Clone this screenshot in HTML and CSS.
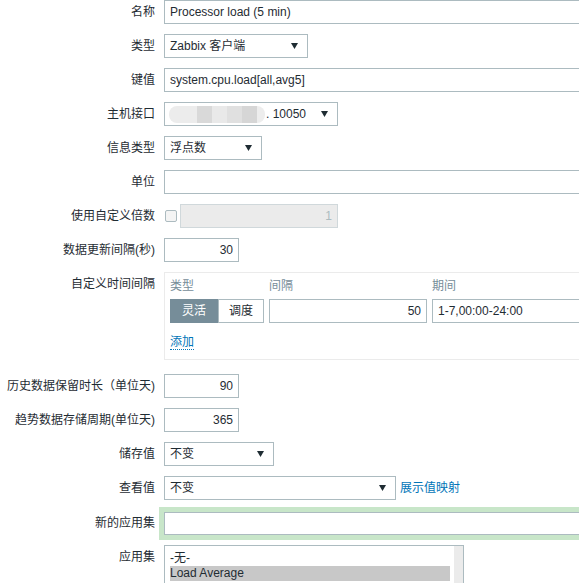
FILE: index.html
```html
<!DOCTYPE html>
<html lang="zh">
<head>
<meta charset="utf-8">
<title>Item</title>
<link rel="stylesheet" href="styles.css">
</head>
<body>
<div class="form">
  <div class="row">
    <div class="label">名称</div>
    <div class="field"><div class="input wide">Processor load (5 min)</div></div>
  </div>
  <div class="row">
    <div class="label">类型</div>
    <div class="field"><div class="select w144"><span>Zabbix 客户端</span><svg class="arrow" viewBox="0 0 7 6"><polygon points="0,0 7,0 3.5,6"/></svg></div></div>
  </div>
  <div class="row">
    <div class="label">键值</div>
    <div class="field"><div class="input wide">system.cpu.load[all,avg5]</div></div>
  </div>
  <div class="row">
    <div class="label">主机接口</div>
    <div class="field"><div class="select w174"><span class="blurwrap"><span class="blur b1"></span><span class="blur b2"></span><span class="blur b3"></span><span class="blur b4"></span><span class="blur b5"></span><span class="blur b6"></span><span class="port">. 10050</span></span><svg class="arrow" viewBox="0 0 7 6"><polygon points="0,0 7,0 3.5,6"/></svg></div></div>
  </div>
  <div class="row">
    <div class="label">信息类型</div>
    <div class="field"><div class="select w98"><span>浮点数</span><svg class="arrow" viewBox="0 0 7 6"><polygon points="0,0 7,0 3.5,6"/></svg></div></div>
  </div>
  <div class="row">
    <div class="label">单位</div>
    <div class="field"><div class="input wide"></div></div>
  </div>
  <div class="row">
    <div class="label">使用自定义倍数</div>
    <div class="field inline"><span class="checkbox"></span><div class="input disabled w158 right">1</div></div>
  </div>
  <div class="row">
    <div class="label">数据更新间隔(秒)</div>
    <div class="field"><div class="input w75 right">30</div></div>
  </div>
  <div class="row top box-row">
    <div class="label">自定义时间间隔</div>
    <div class="field">
      <div class="intervals">
        <div class="igrid">
          <div class="ihead">类型</div>
          <div class="ihead">间隔</div>
          <div class="ihead">期间</div>
          <div class="btngroup"><span class="btn on">灵活</span><span class="btn">调度</span></div>
          <div class="input right">50</div>
          <div class="input periodin">1-7,00:00-24:00</div>
        </div>
        <div class="addrow"><span class="link dotted">添加</span></div>
      </div>
    </div>
  </div>
  <div class="row">
    <div class="label">历史数据保留时长（单位天)</div>
    <div class="field"><div class="input w75 right">90</div></div>
  </div>
  <div class="row">
    <div class="label">趋势数据存储周期(单位天)</div>
    <div class="field"><div class="input w75 right">365</div></div>
  </div>
  <div class="row">
    <div class="label">储存值</div>
    <div class="field"><div class="select w110"><span>不变</span><svg class="arrow" viewBox="0 0 7 6"><polygon points="0,0 7,0 3.5,6"/></svg></div></div>
  </div>
  <div class="row">
    <div class="label">查看值</div>
    <div class="field inline"><div class="select w232"><span>不变</span><svg class="arrow" viewBox="0 0 7 6"><polygon points="0,0 7,0 3.5,6"/></svg></div><span class="link maplink">展示值映射</span></div>
  </div>
  <div class="row newapp">
    <div class="label">新的应用集</div>
    <div class="field"><div class="input wide glow"></div></div>
  </div>
  <div class="row top">
    <div class="label">应用集</div>
    <div class="field">
      <div class="listbox">
        <div class="options">
          <div class="opt">-无-</div>
          <div class="opt sel">Load Average</div>
          <div class="opt">Network interfaces</div>
          <div class="opt">OS</div>
        </div>
        <div class="scroll"></div>
      </div>
    </div>
  </div>
</div>
</body>
</html>
```
FILE: styles.css
```css
html, body {
  margin: 0;
  padding: 0;
  background: #ffffff;
  overflow: hidden;
}
body {
  width: 579px;
  height: 583px;
  font-family: "Liberation Sans", Arial, "Noto Sans CJK SC", sans-serif;
  font-size: 12px;
  color: #1f2c33;
}
.form {
  display: flex;
  flex-direction: column;
  gap: 10px;
  padding-top: 0;
}
.row {
  display: flex;
  align-items: center;
  min-height: 24px;
}
.row.top {
  align-items: flex-start;
}
.label {
  width: 155px;
  flex: none;
  padding-right: 9px;
  text-align: right;
  line-height: 24px;
  white-space: nowrap;
}
.field {
  flex: none;
  display: flex;
  align-items: center;
}
.field.inline {
  gap: 4px;
}
.input, .select {
  box-sizing: border-box;
  height: 24px;
  border: 1px solid #acbbc0;
  background: #fff;
  padding: 0 5px;
  line-height: 22px;
  white-space: nowrap;
  overflow: hidden;
}
.input.wide { width: 453px; }
.input.right { text-align: right; }
.w75 { width: 75px; }
.w158 { width: 158px; }
.select {
  display: flex;
  align-items: center;
  justify-content: space-between;
  padding-right: 9px;
}
.w144 { width: 144px; }
.w174 { width: 174px; }
.w98 { width: 98px; }
.w110 { width: 110px; }
.w232 { width: 232px; }
.arrow {
  width: 7px;
  height: 6px;
  flex: none;
  fill: #1f2c33;
}
.blurwrap {
  display: flex;
  align-items: center;
  margin-left: -1px;
}
.blur {
  display: block;
  height: 17px;
}
.b1 { width: 28px; background: #ececec; border-radius: 8px 0 0 8px; }
.b2 { width: 15px; background: #d9d9d9; }
.b3 { width: 15px; background: #e9e9e9; }
.b4 { width: 15px; background: #e0e0e0; }
.b5 { width: 15px; background: #d6d6d6; }
.b6 { width: 8px; background: #ededed; border-radius: 0 8px 8px 0; }
.port { margin-left: 1px; }
.checkbox {
  box-sizing: border-box;
  width: 12px;
  height: 12px;
  border: 1px solid #acbbc0;
  border-radius: 2px;
  background: #f4f4f4;
  margin-left: 1px;
  margin-right: -1px;
}
.input.disabled {
  background: #ebebeb;
  border-color: #d0d8db;
  color: #acbbc0;
}
.box-row {
  margin-bottom: 4px;
}
.intervals {
  box-sizing: border-box;
  width: 460px;
  border: 1px solid #ebebeb;
  padding: 4px 5px 8px 5px;
}
.igrid {
  display: grid;
  grid-template-columns: 94px 158px 200px;
  column-gap: 5px;
  row-gap: 4px;
}
.ihead {
  color: #768d99;
  line-height: 18px;
}
.btngroup {
  display: flex;
}
.btn {
  box-sizing: border-box;
  height: 24px;
  line-height: 22px;
  width: 46px;
  text-align: center;
  border: 1px solid #acbbc0;
  background: #fff;
  color: #1f2c33;
}
.btn.on {
  width: 48px;
  background: #768d99;
  border-color: #768d99;
  color: #fff;
}
.periodin {
  width: 200px;
}
.addrow {
  margin-top: 10px;
  line-height: 18px;
}
.link {
  color: #0275b8;
}
.dotted {
  border-bottom: 1px dotted #0275b8;
}
.maplink {
  line-height: 24px;
}
.newapp {
  margin-top: 1px;
}
.input.glow {
  box-shadow: 0 0 0 5px #c8e6c9;
  height: 23px;
}
.listbox {
  box-sizing: border-box;
  width: 300px;
  height: 60px;
  border: 1px solid #acbbc0;
  display: flex;
  margin-top: 0;
}
.options {
  flex: 1;
  padding: 5px 4px 0 5px;
  overflow: hidden;
}
.opt {
  line-height: 15px;
  height: 15px;
  white-space: nowrap;
}
.opt.sel {
  background: #c8c8c8;
}
.scroll {
  width: 9px;
  flex: none;
  background: #ebebeb;
}
```
